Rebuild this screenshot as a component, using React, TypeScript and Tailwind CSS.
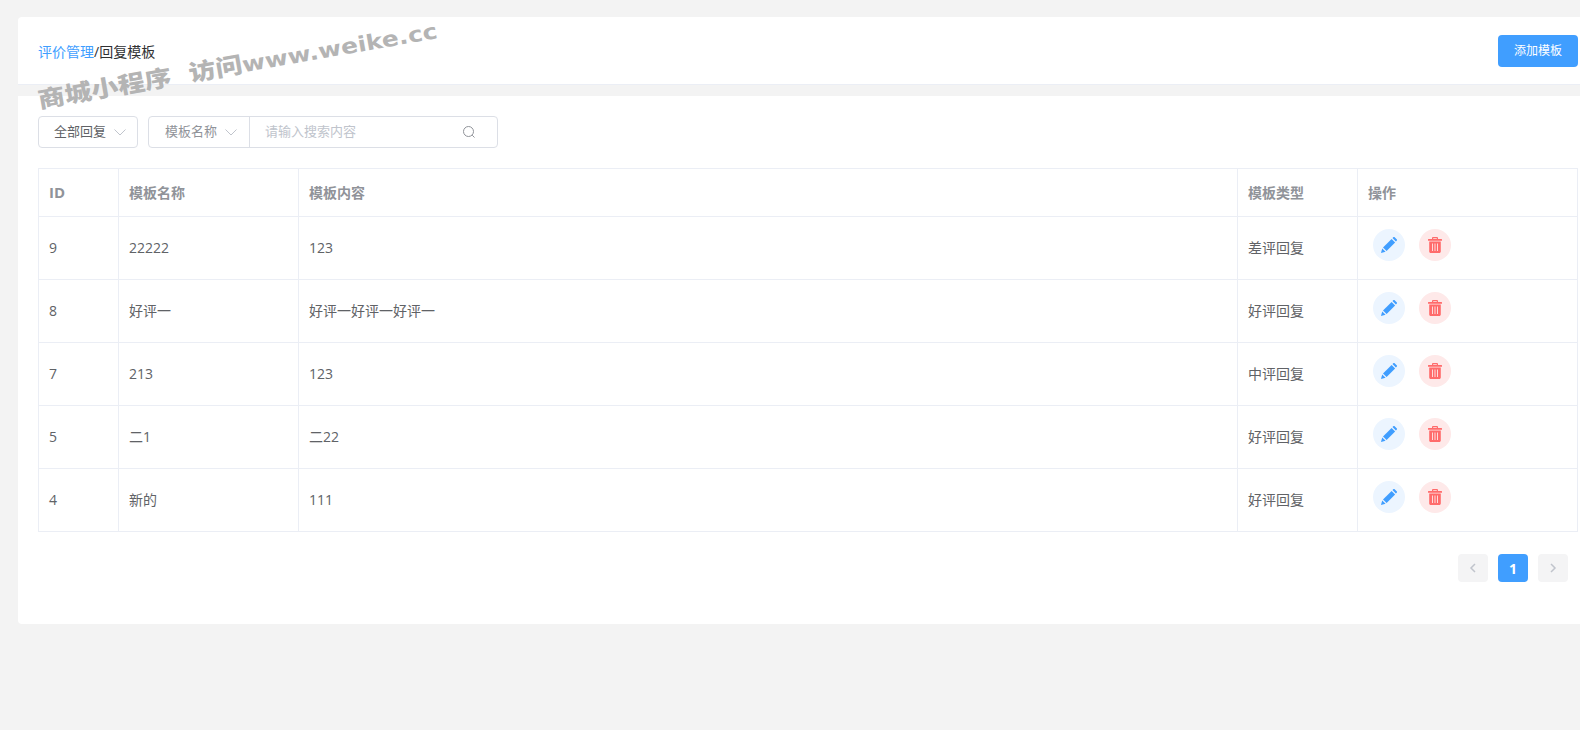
import React from 'react';

const FONT = '"Open Sans", "Noto Sans CJK SC", sans-serif';

const rows = [
  { id: '9', name: '22222', content: '123', type: '差评回复' },
  { id: '8', name: '好评一', content: '好评一好评一好评一', type: '好评回复' },
  { id: '7', name: '213', content: '123', type: '中评回复' },
  { id: '5', name: '二1', content: '二22', type: '好评回复' },
  { id: '4', name: '新的', content: '111', type: '好评回复' },
];

const Chevron: React.FC<{ className?: string }> = ({ className }) => (
  <svg viewBox="0 0 14 14" className={className} fill="none" stroke="currentColor" strokeWidth="1">
    <path d="M1.500 4.500 7 10l5.500-5.500" />
  </svg>
);

const PencilIcon = () => (
  <svg viewBox="0 0 16 16" className="h-4 w-4 text-[#409eff]" fill="currentColor">
    <path d="M0 16l1.200-4.600 3.400 3.400z" />
    <path d="M2 10.400 10.600 1.900l3.500 3.500-8.500 8.600z" />
    <path d="M11.500 1l1-.9c.3-.2.6-.2.9 0l2.500 2.500c.2.3.2.6 0 .9l-1 1z" />
  </svg>
);

const TrashIcon = () => (
  <svg viewBox="0 0 16 16" className="h-4 w-4 text-[#ff6b6b]" fill="currentColor">
    <path fillRule="evenodd" d="M5 2V1.200C5 .5 5.500 0 6.200 0h3.600C10.500 0 11 .5 11 1.200V2h3.500c.3 0 .5.200.5.500v1.300H1V2.500c0-.3.200-.5.500-.5zm1.200 0h3.600V1.200H6.200z" />
    <path fillRule="evenodd" d="M2.200 4.600h11.600v9.900c0 .8-.7 1.500-1.500 1.500H3.700c-.8 0-1.500-.7-1.500-1.500zM5 6.500v7.500h.9V6.500zm2.550 0v7.500h.9V6.500zm2.550 0v7.500h.9V6.500z" />
  </svg>
);

export default function App() {
  return (
    <div className="relative h-[730px] w-[1580px] overflow-hidden bg-[#f3f3f3] pl-[18px] pt-[17px] text-[14px] text-[#606266]" style={{ fontFamily: FONT }}>
      <div className="flex h-[68px] items-center justify-between rounded-tl border-b border-[#ebeef5] bg-white pl-5 pr-0.5">
        <div className="pt-[3px] leading-5">
          <span className="text-[#409eff]">评价管理</span>
          <span className="text-[#303133]">/回复模板</span>
        </div>
        <button className="h-8 w-20 rounded bg-[#409eff] pt-px text-[12px] text-white">添加模板</button>
      </div>

      <div className="mt-[11px] h-[528px] rounded-bl bg-white pl-5 pr-[3px] pt-5">
        <div className="flex gap-2.5">
          <div className="flex h-8 w-[100px] items-center justify-between rounded border border-[#dcdfe6] pl-[15px] pr-[10px] text-[13px] text-[#606266]">
            <span>全部回复</span>
            <Chevron className="h-3.5 w-3.5 text-[#c0c4cc]" />
          </div>
          <div className="flex h-8 w-[350px] rounded border border-[#dcdfe6]">
            <div className="flex w-[101px] shrink-0 items-center justify-between border-r border-[#dcdfe6] pl-4 pr-[11px] text-[13px] text-[#909399]">
              <span>模板名称</span>
              <Chevron className="h-3.5 w-3.5 text-[#c0c4cc]" />
            </div>
            <div className="flex flex-1 items-center justify-between pl-[15px] pr-[21px] text-[13px] text-[#c0c4cc]">
              <span>请输入搜索内容</span>
              <svg viewBox="0 0 14 14" className="h-3.5 w-3.5 text-[#909399]" fill="none" stroke="currentColor" strokeWidth="1">
                <circle cx="6.500" cy="6.500" r="5" />
                <path d="M10.200 10.200 12.500 12.500" />
              </svg>
            </div>
          </div>
        </div>

        <table className="mt-5 w-[1540px] table-fixed border-collapse border border-[#ebeef5]">
          <colgroup>
            <col className="w-20" />
            <col className="w-[180px]" />
            <col className="w-[939px]" />
            <col className="w-[120px]" />
            <col />
          </colgroup>
          <thead>
            <tr className="h-12 text-left font-bold text-[#909399]">
              <th className="border border-[#ebeef5] px-2.5 text-[15px] font-bold">ID</th>
              {['模板名称', '模板内容', '模板类型', '操作'].map((h) => (
                <th key={h} className="border border-[#ebeef5] px-2.5 font-bold">{h}</th>
              ))}
            </tr>
          </thead>
          <tbody>
            {rows.map((r) => (
              <tr key={r.id} className="h-[63px]">
                <td className="border border-[#ebeef5] px-2.5 pb-0.5">{r.id}</td>
                <td className="border border-[#ebeef5] px-2.5 pb-0.5">{r.name}</td>
                <td className="border border-[#ebeef5] px-2.5 pb-0.5">{r.content}</td>
                <td className="border border-[#ebeef5] px-2.5 pb-0.5">{r.type}</td>
                <td className="border border-[#ebeef5] pb-[6px] pl-[15px]">
                  <div className="flex gap-3.5">
                    <span className="flex h-8 w-8 items-center justify-center rounded-full bg-[#ecf5ff]"><PencilIcon /></span>
                    <span className="flex h-8 w-8 items-center justify-center rounded-full bg-[#fee9e9]"><TrashIcon /></span>
                  </div>
                </td>
              </tr>
            ))}
          </tbody>
        </table>

        <div className="mt-[22px] flex justify-end gap-2.5 pr-[9px]">
          <span className="flex h-7 w-[30px] items-center justify-center rounded-sm bg-[#f4f4f5] text-[#c0c4cc]">
            <svg viewBox="0 0 12 12" className="h-3 w-3" fill="none" stroke="currentColor" strokeWidth="1.500"><path d="M8 2 4 6l4 4" /></svg>
          </span>
          <span className="flex h-7 w-[30px] items-center justify-center rounded-sm bg-[#409eff] text-[14px] font-bold text-white">1</span>
          <span className="flex h-7 w-[30px] items-center justify-center rounded-sm bg-[#f4f4f5] text-[#c0c4cc]">
            <svg viewBox="0 0 12 12" className="h-3 w-3" fill="none" stroke="currentColor" strokeWidth="1.500"><path d="M4 2l4 4-4 4" /></svg>
          </span>
        </div>
      </div>

      <div className="pointer-events-none absolute left-[38px] top-[79px] h-10 origin-left -rotate-[10deg] scale-y-[.85] whitespace-nowrap text-[27px] leading-10 font-black text-[#b4b4b4]" style={{ fontFamily: '"Noto Sans CJK SC", sans-serif' }}>
        商城小程序<span className="ml-[18px]">访问</span><span className="text-[25px]" style={{ fontFamily: '"DejaVu Sans", sans-serif' }}>www.weike.cc</span>
      </div>
    </div>
  );
}
